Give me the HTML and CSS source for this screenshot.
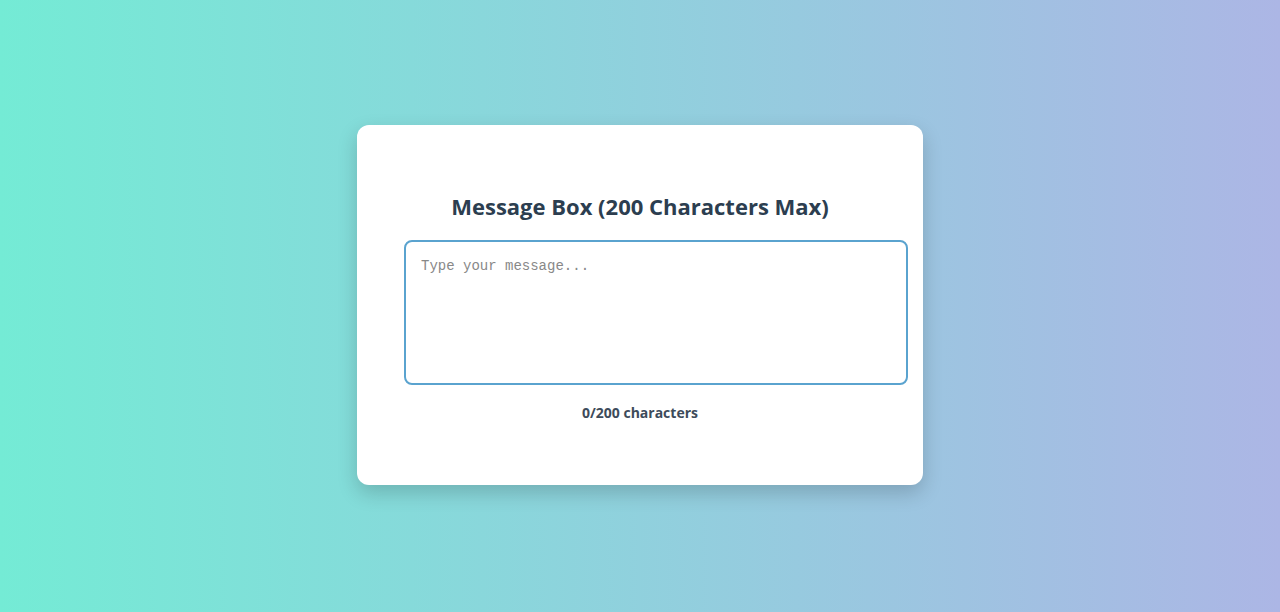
FILE: index.html
```html
<!DOCTYPE html>
<html lang="en">
<head>
<meta charset="utf-8">
<title>Message Box</title>
<link rel="stylesheet" href="styles.css">
</head>
<body>
<main class="card">
  <h2 class="title">Message Box (200 Characters Max)</h2>
  <textarea class="message" placeholder="Type your message..." maxlength="200"></textarea>
  <p class="counter">0/200 characters</p>
</main>
</body>
</html>
```
FILE: styles.css
```css
html, body {
  height: 100%;
}
body {
  margin: 0;
  display: flex;
  align-items: center;
  justify-content: center;
  background: linear-gradient(to right, #74ebd5, #acb6e5);
  font-family: "Open Sans", "Noto Sans", sans-serif;
}
.card {
  width: 470px;
  padding: 48px 48px 62px;
  margin-bottom: 2px;
  background: #fff;
  border-radius: 12px;
  box-shadow: 0 8px 20px rgba(0, 0, 0, 0.18);
}
.title {
  margin: 18px 0 19px;
  text-align: center;
  font-size: 22px;
  line-height: 30px;
  font-weight: 700;
  color: #2c3e50;
}
.message {
  display: block;
  width: 100%;
  height: 111px;
  padding: 15px;
  margin: 0 0 0 -1px;
  border: 2px solid #5aa3cf;
  border-radius: 8px;
  font-family: "Liberation Mono", monospace;
  font-size: 14px;
  line-height: 18px;
  resize: none;
  outline: none;
  color: #333;
}
.message::placeholder {
  color: #888;
}
.counter {
  margin: 18px 0 0;
  text-align: center;
  font-size: 14px;
  line-height: 20px;
  font-weight: 700;
  color: #3d4b5a;
}
```
